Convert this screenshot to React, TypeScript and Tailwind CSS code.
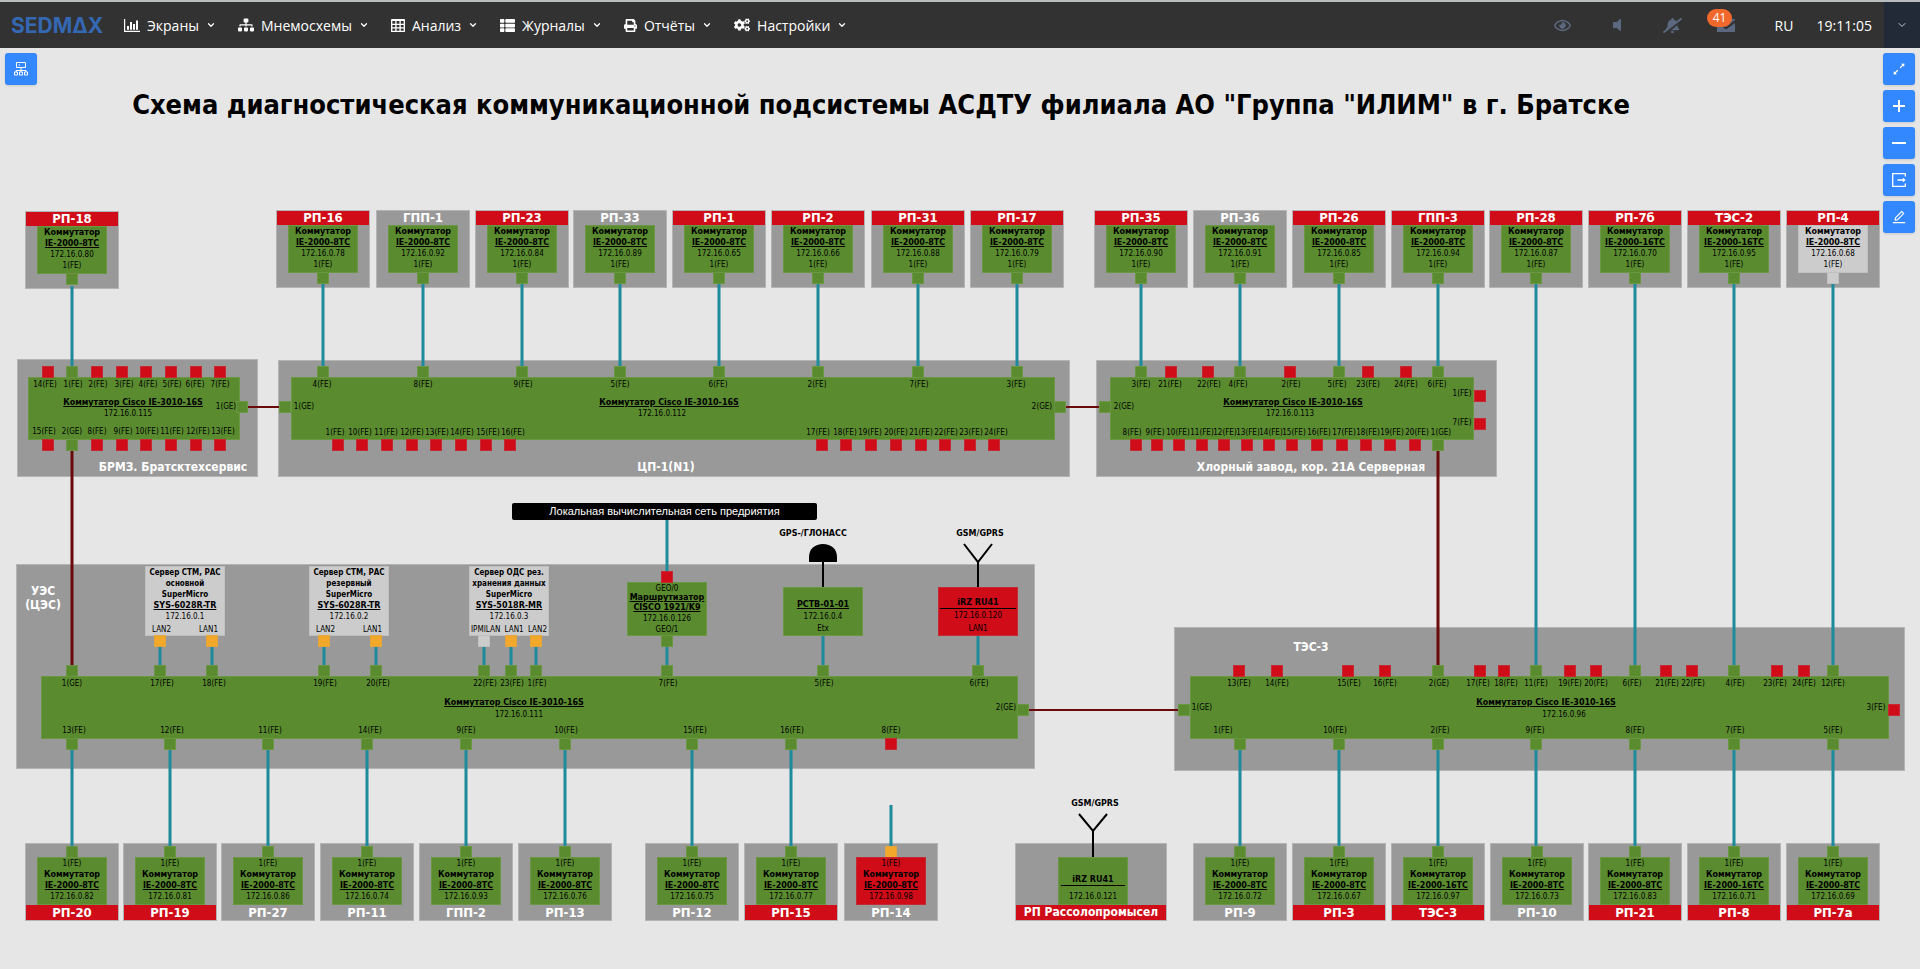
import React from "react";
import { FaSitemap, FaThList, FaPrint, FaCogs, FaRegEye, FaVolumeOff, FaBellSlash } from "react-icons/fa";
import { AiOutlineArrowsAlt, AiOutlineEdit } from "react-icons/ai";
import { FiChevronDown } from "react-icons/fi";

/* ---------- types and palette ---------- */

type Tone = "green" | "red" | "orange" | "idle";

const toneClass: Record<Tone, string> = {
  green: "border bg-[#5a8c2f] border-[#6b9744]",
  red: "border bg-[#cf0c17] border-[#c42a33]",
  orange: "border bg-[#f2a92b] border-[#e2a43c]",
  idle: "border bg-[#cccccc] border-[#c0c0c0]",
};

const panelClass = "border border-[#b4b4b4] bg-[#999999]";
const boldText = "font-bold [font-family:'DejaVu_Sans',sans-serif]";
const linkText = `underline ${boldText}`;
const groupText = "text-[12px] leading-[14px] font-bold text-white";

/* Scheme coordinates are counted from the top of the window. */
const HEADER = 48;

/* ---------- primitives of the scheme ---------- */

type NodeProps = { x: number; y: number; w: number; h: number; className?: string; children?: React.ReactNode };

function Box({ x, y, w, h, className = "", children }: NodeProps) {
  return (
    <div className={`absolute ${className}`} style={{ left: x, top: y - HEADER, width: w, height: h }}>
      {children}
    </div>
  );
}

function Port({ x, y, tone = "green" }: { x: number; y: number; tone?: Tone }) {
  return <Box x={x - 6} y={y} w={12} h={12} className={toneClass[tone]} />;
}

/* Text centred on the point x, y. */
function Label({ x, y, className = "", children }: { x: number; y: number; className?: string; children: React.ReactNode }) {
  return (
    <span
      className={`absolute -translate-x-1/2 -translate-y-1/2 text-center whitespace-nowrap ${className}`}
      style={{ left: x, top: y - HEADER }}
    >
      {children}
    </span>
  );
}

/* ---------- substations ---------- */

type Station = {
  name: string;
  x: number;
  ip: string;
  alarm?: boolean;
  model?: string;
  tone?: Tone;
  port?: Tone;
  dy?: number;
};

const topStations: Station[] = [
  { name: "РП-18", x: 72, ip: "172.16.0.80", alarm: true, dy: 1 },
  { name: "РП-16", x: 323, ip: "172.16.0.78", alarm: true },
  { name: "ГПП-1", x: 423, ip: "172.16.0.92" },
  { name: "РП-23", x: 522, ip: "172.16.0.84", alarm: true },
  { name: "РП-33", x: 620, ip: "172.16.0.89" },
  { name: "РП-1", x: 719, ip: "172.16.0.65", alarm: true },
  { name: "РП-2", x: 818, ip: "172.16.0.66", alarm: true },
  { name: "РП-31", x: 918, ip: "172.16.0.88", alarm: true },
  { name: "РП-17", x: 1017, ip: "172.16.0.79", alarm: true },
  { name: "РП-35", x: 1141, ip: "172.16.0.90", alarm: true },
  { name: "РП-36", x: 1240, ip: "172.16.0.91" },
  { name: "РП-26", x: 1339, ip: "172.16.0.85", alarm: true },
  { name: "ГПП-3", x: 1438, ip: "172.16.0.94", alarm: true },
  { name: "РП-28", x: 1536, ip: "172.16.0.87", alarm: true },
  { name: "РП-7б", x: 1635, ip: "172.16.0.70", alarm: true, model: "IE-2000-16TC" },
  { name: "ТЭС-2", x: 1734, ip: "172.16.0.95", alarm: true, model: "IE-2000-16TC" },
  { name: "РП-4", x: 1833, ip: "172.16.0.68", alarm: true, tone: "idle", port: "idle" },
];

const bottomStations: Station[] = [
  { name: "РП-20", x: 72, ip: "172.16.0.82", alarm: true },
  { name: "РП-19", x: 170, ip: "172.16.0.81", alarm: true },
  { name: "РП-27", x: 268, ip: "172.16.0.86" },
  { name: "РП-11", x: 367, ip: "172.16.0.74" },
  { name: "ГПП-2", x: 466, ip: "172.16.0.93" },
  { name: "РП-13", x: 565, ip: "172.16.0.76" },
  { name: "РП-12", x: 692, ip: "172.16.0.75" },
  { name: "РП-15", x: 791, ip: "172.16.0.77", alarm: true },
  { name: "РП-14", x: 891, ip: "172.16.0.98", tone: "red", port: "orange" },
  { name: "РП-9", x: 1240, ip: "172.16.0.72" },
  { name: "РП-3", x: 1339, ip: "172.16.0.67", alarm: true },
  { name: "ТЭС-3", x: 1438, ip: "172.16.0.97", alarm: true, model: "IE-2000-16TC" },
  { name: "РП-10", x: 1537, ip: "172.16.0.73" },
  { name: "РП-21", x: 1635, ip: "172.16.0.83", alarm: true },
  { name: "РП-8", x: 1734, ip: "172.16.0.71", alarm: true, model: "IE-2000-16TC" },
  { name: "РП-7а", x: 1833, ip: "172.16.0.69", alarm: true },
];

const nameBar = "flex w-full shrink-0 items-center justify-center font-bold text-white";
const switchBody = "flex h-12 w-[70px] shrink-0 flex-col items-center text-[8px] leading-[11px] whitespace-nowrap";

function TopStation({ name, x, ip, alarm, model = "IE-2000-8TC", tone = "green", port = "green", dy = 0 }: Station) {
  return (
    <Box x={x - 47} y={210 + dy} w={94} h={78} className={`flex flex-col items-center ${panelClass}`}>
      <div className={`${nameBar} h-[14px] pb-px text-[13px] leading-[12px] ${alarm ? "bg-[#cf0c17]" : ""}`}>{name}</div>
      <div className={`${switchBody} ${toneClass[tone]}`}>
        <span className={boldText}>Коммутатор</span>
        <span className={linkText}>{model}</span>
        <span>{ip}</span>
        <span>1(FE)</span>
      </div>
      <div className={`-mt-px size-3 shrink-0 ${toneClass[port]}`} />
    </Box>
  );
}

function BottomStation({ name, x, ip, alarm, model = "IE-2000-8TC", tone = "green", port = "green" }: Station) {
  return (
    <Box x={x - 47} y={843} w={94} h={78} className={`flex flex-col items-center justify-end ${panelClass}`}>
      <div className={`-mb-px size-3 shrink-0 ${toneClass[port]}`} />
      <div className={`${switchBody} ${toneClass[tone]}`}>
        <span>1(FE)</span>
        <span className={boldText}>Коммутатор</span>
        <span className={linkText}>{model}</span>
        <span>{ip}</span>
      </div>
      <div className={`${nameBar} h-[15px] pb-px text-[13px] leading-[13px] ${alarm ? "bg-[#cf0c17]" : ""}`}>{name}</div>
    </Box>
  );
}

/* ---------- core switches ---------- */

/* [port centre, label centre, label, tone] */
type PortRow = [number, number, string, Tone?];

type Core = {
  group: [number, number, number, number];
  body: [number, number, number, number];
  title: [number, number];
  ip: [number, number, string];
  top: PortRow[];
  bottom: PortRow[];
  topLabelY: number;
  bottomLabelY: number;
};

const cores: Core[] = [
  {
    group: [17, 359, 241, 118],
    body: [28, 377, 212, 63],
    title: [133, 403],
    ip: [128, 414, "172.16.0.115"],
    topLabelY: 385,
    bottomLabelY: 432,
    top: [
      [48, 45, "14(FE)", "red"], [72, 73, "1(FE)"], [97, 98, "2(FE)", "red"], [122, 124, "3(FE)", "red"],
      [146, 148, "4(FE)", "red"], [171, 172, "5(FE)", "red"], [196, 195, "6(FE)", "red"], [220, 220, "7(FE)", "red"],
    ],
    bottom: [
      [48, 44, "15(FE)", "red"], [72, 72, "2(GE)"], [97, 97, "8(FE)", "red"], [122, 123, "9(FE)", "red"],
      [146, 147, "10(FE)", "red"], [171, 172, "11(FE)", "red"], [196, 198, "12(FE)", "red"], [220, 223, "13(FE)", "red"],
    ],
  },
  {
    group: [278, 360, 792, 117],
    body: [291, 377, 764, 63],
    title: [669, 403],
    ip: [662, 414, "172.16.0.112"],
    topLabelY: 385,
    bottomLabelY: 433,
    top: [
      [323, 322, "4(FE)"], [423, 423, "8(FE)"], [522, 523, "9(FE)"], [620, 620, "5(FE)"],
      [719, 718, "6(FE)"], [818, 817, "2(FE)"], [918, 919, "7(FE)"], [1017, 1016, "3(FE)"],
    ],
    bottom: [
      [338, 335, "1(FE)", "red"], [362, 360, "10(FE)", "red"], [387, 386, "11(FE)", "red"], [412, 412, "12(FE)", "red"],
      [436, 437, "13(FE)", "red"], [461, 462, "14(FE)", "red"], [486, 488, "15(FE)", "red"], [510, 513, "16(FE)", "red"],
      [822, 818, "17(FE)", "red"], [846, 845, "18(FE)", "red"], [871, 870, "19(FE)", "red"], [896, 896, "20(FE)", "red"],
      [921, 921, "21(FE)", "red"], [945, 946, "22(FE)", "red"], [970, 971, "23(FE)", "red"], [994, 996, "24(FE)", "red"],
    ],
  },
  {
    group: [1096, 360, 401, 117],
    body: [1110, 377, 364, 63],
    title: [1293, 403],
    ip: [1290, 414, "172.16.0.113"],
    topLabelY: 385,
    bottomLabelY: 433,
    top: [
      [1141, 1141, "3(FE)"], [1171, 1170, "21(FE)", "red"], [1208, 1209, "22(FE)", "red"], [1240, 1238, "4(FE)"],
      [1290, 1291, "2(FE)", "red"], [1339, 1337, "5(FE)"], [1368, 1368, "23(FE)", "red"], [1406, 1406, "24(FE)", "red"],
      [1438, 1437, "6(FE)"],
    ],
    bottom: [
      [1136, 1132, "8(FE)", "red"], [1157, 1155, "9(FE)", "red"], [1179, 1178, "10(FE)", "red"], [1202, 1202, "11(FE)", "red"],
      [1224, 1225, "12(FE)", "red"], [1247, 1248, "13(FE)", "red"], [1269, 1271, "14(FE)", "red"], [1292, 1294, "15(FE)", "red"],
      [1317, 1319, "16(FE)", "red"], [1342, 1344, "17(FE)", "red"], [1366, 1368, "18(FE)", "red"], [1390, 1392, "19(FE)", "red"],
      [1415, 1417, "20(FE)", "red"], [1438, 1441, "1(GE)"],
    ],
  },
  {
    group: [16, 564, 1019, 205],
    body: [41, 676, 977, 63],
    title: [514, 703],
    ip: [519, 715, "172.16.0.111"],
    topLabelY: 684,
    bottomLabelY: 731,
    top: [
      [72, 72, "1(GE)"], [160, 162, "17(FE)"], [212, 214, "18(FE)"], [324, 325, "19(FE)"], [376, 378, "20(FE)"],
      [484, 485, "22(FE)"], [511, 512, "23(FE)"], [536, 537, "1(FE)"], [667, 668, "7(FE)"], [823, 824, "5(FE)"],
      [978, 979, "6(FE)"],
    ],
    bottom: [
      [72, 74, "13(FE)"], [170, 172, "12(FE)"], [268, 270, "11(FE)"], [367, 370, "14(FE)"], [466, 466, "9(FE)"],
      [565, 566, "10(FE)"], [692, 695, "15(FE)"], [791, 792, "16(FE)"], [891, 891, "8(FE)", "red"],
    ],
  },
  {
    group: [1174, 627, 731, 144],
    body: [1190, 676, 699, 63],
    title: [1546, 703],
    ip: [1564, 715, "172.16.0.96"],
    topLabelY: 684,
    bottomLabelY: 731,
    top: [
      [1239, 1239, "13(FE)", "red"], [1277, 1277, "14(FE)", "red"], [1348, 1349, "15(FE)", "red"], [1385, 1385, "16(FE)", "red"],
      [1438, 1439, "2(GE)"], [1480, 1478, "17(FE)", "red"], [1504, 1506, "18(FE)", "red"], [1536, 1536, "11(FE)"],
      [1570, 1570, "19(FE)", "red"], [1596, 1596, "20(FE)", "red"], [1635, 1632, "6(FE)"], [1666, 1667, "21(FE)", "red"],
      [1692, 1693, "22(FE)", "red"], [1734, 1735, "4(FE)"], [1777, 1775, "23(FE)", "red"], [1804, 1804, "24(FE)", "red"],
      [1833, 1833, "12(FE)"],
    ],
    bottom: [
      [1240, 1223, "1(FE)"], [1339, 1335, "10(FE)"], [1438, 1440, "2(FE)"], [1536, 1535, "9(FE)"],
      [1635, 1635, "8(FE)"], [1734, 1735, "7(FE)"], [1833, 1833, "5(FE)"],
    ],
  },
];

function CoreSwitch({ body, title, ip, top, bottom, topLabelY, bottomLabelY }: Core) {
  const [x, y, w, h] = body;
  return (
    <>
      <Box x={x} y={y} w={w} h={h} className={toneClass.green} />
      {top.map(([px, lx, text, tone]) => (
        <React.Fragment key={text}>
          <Port x={px} y={y - 11} tone={tone} />
          <Label x={lx} y={topLabelY}>{text}</Label>
        </React.Fragment>
      ))}
      {bottom.map(([px, lx, text, tone]) => (
        <React.Fragment key={text}>
          <Port x={px} y={y + h - 1} tone={tone} />
          <Label x={lx} y={bottomLabelY}>{text}</Label>
        </React.Fragment>
      ))}
      <Label x={title[0]} y={title[1]} className={linkText}>Коммутатор Cisco IE-3010-16S</Label>
      <Label x={ip[0]} y={ip[1]}>{ip[2]}</Label>
    </>
  );
}

/* Ports on the short sides of the core switches: [port x, port y, label x, label y, label, tone] */
const sidePorts: [number, number, number, number, string, Tone?][] = [
  [242, 401, 226, 407, "1(GE)"],
  [285, 401, 304, 407, "1(GE)"],
  [1060, 401, 1042, 407, "2(GE)"],
  [1105, 401, 1124, 407, "2(GE)"],
  [1480, 390, 1462, 394, "1(FE)", "red"],
  [1480, 418, 1462, 423, "7(FE)", "red"],
  [1023, 704, 1006, 708, "2(GE)"],
  [1184, 704, 1202, 708, "1(GE)"],
  [1894, 704, 1876, 708, "3(FE)", "red"],
];

/* ---------- servers and routers ---------- */

type Server = { x: number; lines: string[]; model: string; ip: string; inset: string; lan: [number, string, Tone][] };

const servers: Server[] = [
  {
    x: 145, lines: ["Сервер СТМ, РАС", "основной", "SuperMicro"], model: "SYS-6028R-TR", ip: "172.16.0.1", inset: "px-[6px]",
    lan: [[160, "LAN2", "orange"], [212, "LAN1", "orange"]],
  },
  {
    x: 309, lines: ["Сервер СТМ, РАС", "резервный", "SuperMicro"], model: "SYS-6028R-TR", ip: "172.16.0.2", inset: "px-[6px]",
    lan: [[324, "LAN2", "orange"], [376, "LAN1", "orange"]],
  },
  {
    x: 469, lines: ["Сервер ОДС рез.", "хранения данных", "SuperMicro"], model: "SYS-5018R-MR", ip: "172.16.0.3", inset: "px-px",
    lan: [[484, "IPMILAN", "idle"], [511, "LAN1", "orange"], [536, "LAN2", "orange"]],
  },
];

function ServerNode({ x, lines, model, ip, inset, lan }: Server) {
  return (
    <>
      <Box x={x} y={566} w={80} h={70} className={`flex flex-col items-center leading-[11px] whitespace-nowrap ${toneClass.idle}`}>
        {lines.map((line) => <span key={line} className="font-bold">{line}</span>)}
        <span className={linkText}>{model}</span>
        <span>{ip}</span>
        <div className={`mt-auto flex w-full justify-between ${inset}`}>
          {lan.map(([, text]) => <span key={text}>{text}</span>)}
        </div>
      </Box>
      {lan.map(([px, text, tone]) => <Port key={text} x={px} y={635} tone={tone} />)}
    </>
  );
}

function Device({ tone, children, ...place }: { x: number; y: number; w: number; h: number; tone: Tone; children: React.ReactNode }) {
  return (
    <Box {...place} className={`flex flex-col items-center justify-end whitespace-nowrap ${toneClass[tone]}`}>
      {children}
    </Box>
  );
}

/* ---------- links ---------- */

type Link = [number, number, number];

/* Vertical Fast Ethernet links: [x, y1, y2] */
const feLinks: Link[] = [
  [72, 286, 366],
  ...[323, 423, 522, 620, 719, 818, 918, 1017, 1141, 1240, 1339, 1438].map((x): Link => [x, 284, 366]),
  ...[1536, 1635, 1734, 1833].map((x): Link => [x, 284, 665]),
  ...[72, 170, 268, 367, 466, 565, 692, 791, 1240, 1339, 1438, 1536, 1635, 1734, 1833].map((x): Link => [x, 750, 846]),
  [891, 805, 846],
  ...[160, 212, 324, 376, 484, 511, 536, 667].map((x): Link => [x, 646, 665]),
  [823, 635, 665],
  [978, 635, 665],
  [667, 519, 572],
];

function Links() {
  return (
    <svg className="absolute inset-0 h-full w-full overflow-visible" aria-hidden="true">
      <g transform={`translate(0 ${-HEADER})`} fill="none" strokeWidth="3">
        <g stroke="#1d8b9b">
          {feLinks.map(([x, a, b]) => (
            <path key={`${x}-${a}`} d={`M${x} ${a}V${b}`} />
          ))}
        </g>
        <path stroke="#6b0a0a" d="M72 451V666M1438 451V666" />
        <path stroke="#6b0a0a" strokeWidth="2" d="M247 407H280M1066 407H1100M1028 710H1179" />
        <g stroke="#000000" strokeWidth="2">
          <path d="M823 561V588M978 588V562M964 544L978 562L992 544M1093 857V831M1079 814L1093 831L1107 814" />
          <path d="M809 562V557C809 549 815 544 823 544C831 544 837 549 837 557V562Z" fill="#000000" stroke="none" />
        </g>
      </g>
    </svg>
  );
}

/* ---------- scheme ---------- */

function Scheme() {
  return (
    <section
      aria-label="Мнемосхема"
      className="relative h-[900px] min-w-full text-[8px] leading-[10px] text-black [font-family:'DejaVu_Sans_Condensed','DejaVu_Sans',sans-serif]"
    >
      <h1
        className="absolute -translate-x-1/2 -translate-y-1/2 text-[27px] leading-8 font-bold whitespace-nowrap"
        style={{ left: 881, top: 105 - HEADER }}
      >
        Схема диагностическая коммуникационной подсистемы АСДТУ филиала АО "Группа "ИЛИМ" в г. Братске
      </h1>

      {cores.map(({ group: [x, y, w, h] }) => (
        <Box key={`${x}-${y}`} x={x} y={y} w={w} h={h} className={panelClass} />
      ))}
      {topStations.map((s) => <TopStation key={s.name} {...s} />)}
      {bottomStations.map((s) => <BottomStation key={s.name} {...s} />)}

      <Box x={1015} y={843} w={152} h={78} className={`flex flex-col justify-end ${panelClass}`}>
        <div className={`${nameBar} h-[15px] bg-[#cf0c17] pb-px text-[12px] leading-[13px]`}>РП Рассолопромысел</div>
      </Box>
      <Device x={1058} y={857} w={70} h={48} tone="green">
        <span className={`mb-1 w-[64px] border-b border-black text-center ${boldText}`}>iRZ RU41</span>
        <span className="leading-[14px]">172.16.0.121</span>
      </Device>

      <Links />

      {cores.map((c) => <CoreSwitch key={c.ip[2]} {...c} />)}
      {sidePorts.map(([px, py, lx, ly, text, tone]) => (
        <React.Fragment key={`${px}-${py}`}>
          <Port x={px} y={py} tone={tone} />
          <Label x={lx} y={ly}>{text}</Label>
        </React.Fragment>
      ))}

      <Label x={173} y={467} className={groupText}>БРМЗ. Братсктехсервис</Label>
      <Label x={666} y={467} className={groupText}>ЦП-1(N1)</Label>
      <Label x={1311} y={467} className={groupText}>Хлорный завод, кор. 21А Серверная</Label>
      <Label x={43} y={598} className={groupText}>УЭС<br />(ЦЭС)</Label>
      <Label x={1311} y={647} className={groupText}>ТЭС-3</Label>

      {servers.map((s) => <ServerNode key={s.ip} {...s} />)}

      <Box x={512} y={503} w={305} h={17} className="flex items-center justify-center rounded-xs bg-black pb-px text-[11px] leading-3 text-white [font-family:'Liberation_Sans',sans-serif]">
        Локальная вычислительная сеть предриятия
      </Box>

      <Device x={627} y={582} w={80} h={54} tone="green">
        <span className="leading-2">GEO/0</span>
        <span className={linkText}>Маршрутизатор</span>
        <span className={linkText}>CISCO 1921/K9</span>
        <span className="leading-3">172.16.0.126</span>
        <span>GEO/1</span>
      </Device>
      <Port x={667} y={571} tone="red" />
      <Port x={667} y={635} />

      <Label x={813} y={534} className={boldText}>GPS-/ГЛОНАСС</Label>
      <Device x={783} y={587} w={80} h={49} tone="green">
        <span className={`leading-3 ${linkText}`}>РСТВ-01-01</span>
        <span className="leading-3">172.16.0.4</span>
        <span className="leading-3">Etx</span>
      </Device>

      <Label x={980} y={534} className={boldText}>GSM/GPRS</Label>
      <Device x={938} y={587} w={80} h={49} tone="red">
        <span className={`w-[76px] border-b border-black text-center ${boldText}`}>iRZ RU41</span>
        <span className="leading-[14px]">172.16.0.120</span>
        <span className="leading-3">LAN1</span>
      </Device>

      <Label x={1095} y={804} className={boldText}>GSM/GPRS</Label>
    </section>
  );
}

/* ---------- icons ---------- */

function BarsIcon() {
  return (
    <svg viewBox="0 0 16 13" className="h-[13px] w-4" fill="currentColor" aria-hidden="true">
      <path d="M0 0H1.2V11.8H16V13H0ZM3 7H5V10.8H3ZM6 3H8V10.8H6ZM9 5H11V10.8H9ZM12 1.5H14V10.8H12Z" />
    </svg>
  );
}

function GridIcon() {
  return (
    <svg viewBox="0 0 14 13" className="h-[13px] w-[14px]" fill="none" stroke="currentColor" aria-hidden="true">
      <path strokeWidth="1.3" d="M0.7 1.2H13.3V12.3H0.7ZM4.9 1V12.3M9.1 1V12.3M0.7 5.3H13.3M0.7 8.8H13.3" />
      <path strokeWidth="2" d="M0.5 1H13.5" />
    </svg>
  );
}

function MailIcon() {
  return (
    <svg viewBox="0 0 18 13" className="h-[13px] w-[18px]" fill="currentColor" aria-hidden="true">
      <path d="M0 1L9 8L18 1V0H0ZM0 4V13H18V4L9 10.5Z" />
    </svg>
  );
}

function NetworkIcon() {
  return (
    <svg viewBox="0 0 14 14" className="size-[14px]" fill="none" stroke="currentColor" aria-hidden="true">
      <path d="M2.5 0.5H11.5V5.5H2.5ZM7 5.5V10M2 10V8.5H12V10M4.5 3H6" />
      <path d="M0.5 10H3.5V13H0.5ZM5.5 10H8.5V13H5.5ZM10.5 10H13.5V13H10.5Z" />
    </svg>
  );
}

function PlusIcon() {
  return (
    <svg viewBox="0 0 12 12" className="size-3" stroke="currentColor" strokeWidth="2" aria-hidden="true">
      <path d="M0 6H12M6 0V12" />
    </svg>
  );
}

function MinusIcon() {
  return (
    <svg viewBox="0 0 14 12" className="h-3 w-[14px]" stroke="currentColor" strokeWidth="2" aria-hidden="true">
      <path d="M0 6H14" />
    </svg>
  );
}

function ExportIcon() {
  return (
    <svg viewBox="0 0 14 14" className="size-[14px]" fill="none" stroke="currentColor" strokeWidth="1.3" aria-hidden="true">
      <path d="M13.3 3.5V0.7H0.7V13.3H13.3V10.5M5.5 7H12" />
      <path d="M10.8 4.8L13.8 7L10.8 9.2Z" fill="currentColor" stroke="none" />
    </svg>
  );
}

/* ---------- header ---------- */

const menu = [
  { text: "Экраны", icon: <BarsIcon /> },
  { text: "Мнемосхемы", icon: <FaSitemap className="h-[14px] w-4" /> },
  { text: "Анализ", icon: <GridIcon /> },
  { text: "Журналы", icon: <FaThList className="size-[15px]" /> },
  { text: "Отчёты", icon: <FaPrint className="size-[13px]" /> },
  { text: "Настройки", icon: <FaCogs className="size-4" /> },
];

function Header() {
  return (
    <header className="flex h-12 shrink-0 items-stretch border-t-2 border-[#b9bdbd] bg-[#323232] text-[14px] text-white">
      <a href="#home" className="flex w-[113px] items-center pl-[11px] text-[21px] leading-none font-bold text-[#3568b3] [font-family:Inter,sans-serif]">
        SEDMΔX
      </a>
      <nav className="flex items-stretch">
        {menu.map(({ text, icon }) => (
          <button key={text} type="button" className="flex items-center gap-[7px] px-[11px]">
            {icon}
            <span>{text}</span>
            <FiChevronDown className="size-[10px] stroke-3" aria-hidden="true" />
          </button>
        ))}
      </nav>
      <div className="ml-auto flex items-stretch text-[#5b6880]">
        <button type="button" aria-label="Наблюдение" className="flex w-[53px] items-center justify-center"><FaRegEye className="size-[17px]" /></button>
        <button type="button" aria-label="Звук" className="flex w-[56px] items-center justify-center"><FaVolumeOff className="size-4" /></button>
        <button type="button" aria-label="Оповещения" className="flex w-[54px] items-center justify-center"><FaBellSlash className="size-[19px] -scale-x-100" /></button>
        <button type="button" aria-label="Сообщения" className="relative flex w-[54px] items-center justify-center">
          <MailIcon />
          <span className="absolute top-[7px] left-[8px] flex h-[18px] w-[25px] items-center justify-center rounded-full bg-[#f0682c] text-[12px] text-white">41</span>
        </button>
        <button type="button" className="w-[62px] text-white">RU</button>
        <time className="flex w-[61px] items-center justify-end pr-[4px] text-white">19:11:05</time>
        <button type="button" aria-label="Меню пользователя" className="ml-2 flex w-9 items-center justify-center bg-[#222a38] text-[#c3c9d4]">
          <FiChevronDown className="size-3" />
        </button>
      </div>
    </header>
  );
}

const toolButton = "flex size-8 items-center justify-center rounded-[3px] bg-[#3388ff] text-white shadow-sm";

const tools = [
  { text: "Развернуть", icon: <AiOutlineArrowsAlt className="size-4" /> },
  { text: "Увеличить", icon: <PlusIcon /> },
  { text: "Уменьшить", icon: <MinusIcon /> },
  { text: "Экспорт", icon: <ExportIcon /> },
  { text: "Редактировать", icon: <AiOutlineEdit className="size-4" /> },
];

export default function App() {
  return (
    <div className="flex min-h-screen flex-col bg-[#e6e6e6] [font-family:'Open_Sans','Noto_Sans',sans-serif]">
      <Header />
      <main className="relative flex-1 overflow-hidden">
        <Scheme />
        <button type="button" aria-label="Список схем" className={`${toolButton} absolute top-[5px] left-[5px]`}>
          <NetworkIcon />
        </button>
        <div className="absolute top-[5px] right-[5px] flex flex-col gap-[5px]">
          {tools.map(({ text, icon }) => (
            <button key={text} type="button" aria-label={text} className={toolButton}>{icon}</button>
          ))}
        </div>
      </main>
    </div>
  );
}
